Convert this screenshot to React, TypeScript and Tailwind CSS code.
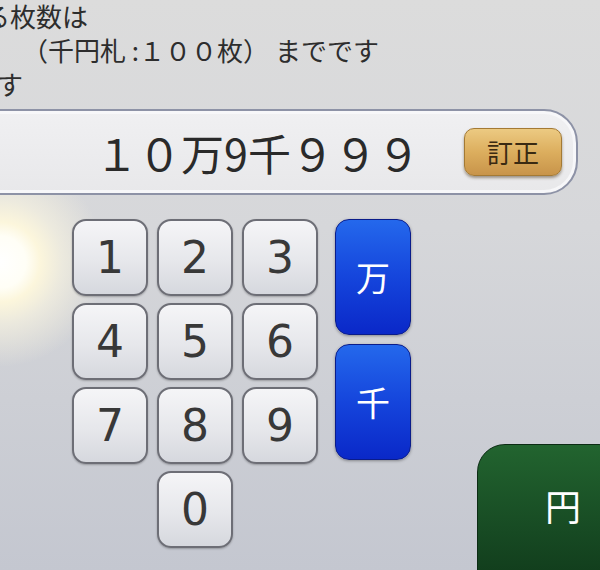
import React from 'react'

const jp = "font-['Noto_Sans_CJK_JP','Noto_Sans',sans-serif]"

const Key: React.FC<{ label: string; className?: string }> = ({ label, className = '' }) => (
  <button
    className={`w-[76px] h-[77px] rounded-[14px] border-2 border-[#6d6e76] bg-[linear-gradient(180deg,#f5f5f7_0%,#e6e7eb_55%,#d6d8de_100%)] shadow-[0_1px_2px_rgba(0,0,0,0.25)] flex items-center justify-center text-[44px] leading-none text-[#383838] font-['DejaVu_Sans',sans-serif] ${className}`}
  >
    {label}
  </button>
)

const UnitKey: React.FC<{ label: string }> = ({ label }) => (
  <button
    className={`w-[76px] h-[116px] rounded-[14px] border border-[#0a1c8a] bg-[linear-gradient(180deg,#2468ec_0%,#1545dc_50%,#0a28c8_100%)] shadow-[0_1px_3px_rgba(0,0,0,0.35)] flex items-center justify-center text-white text-[34px] leading-none ${jp}`}
  >
    {label}
  </button>
)

export default function App() {
  const keys = ['1', '2', '3', '4', '5', '6', '7', '8', '9']

  return (
    <div
      className={`w-[600px] h-[570px] overflow-hidden flex flex-col text-[#2d2d2d] ${jp} bg-[radial-gradient(circle_at_0px_262px,#ffffff_0px,#fffef6_26px,#fcf6dc_40px,rgba(246,242,224,0.7)_62px,rgba(230,230,228,0)_105px),linear-gradient(180deg,#dcdcdc_0%,#d6d7da_40%,#c4c7d0_100%)]`}
    >
      {/* message */}
      <div className="text-[26px] leading-[34px] -mt-[1px]">
        <div className="-ml-[16px] whitespace-nowrap">る枚数は</div>
        <div className="ml-[22px] whitespace-nowrap">（千円札 :１００枚） までです</div>
        <div className="-ml-[3px] whitespace-nowrap">す</div>
      </div>

      {/* amount display */}
      <div className="mt-[8px] -ml-[30px] w-[608px] h-[86px] shrink-0 rounded-r-[34px] rounded-l-[10px] border-2 border-[#8d92a6] bg-[linear-gradient(180deg,#f0f0f2_0%,#e8e8ea_100%)] shadow-[inset_0_0_0_3px_#f7f7f9] flex items-center justify-end pr-[14px]">
        <div className="mr-[44px] text-[43px] leading-none text-[#2a2a2a] whitespace-nowrap">１０万9千９９９</div>
        <button className="w-[98px] h-[48px] rounded-[10px] border border-[#a47a34] bg-[linear-gradient(180deg,#ecca82_0%,#dcae5e_50%,#c8944a_100%)] shadow-[0_2px_3px_rgba(60,40,10,0.45)] flex items-center justify-center text-[26px] leading-none text-[#3a2a12]">
          訂正
        </button>
      </div>

      {/* keypad row */}
      <div className="mt-[24px] flex items-start">
        <div className="ml-[72px] grid grid-cols-[76px_76px_76px] gap-x-[9px] gap-y-[7px]">
          {keys.map((k) => (
            <Key key={k} label={k} />
          ))}
          <Key label="0" className="col-start-2" />
        </div>

        <div className="ml-[17px] flex flex-col gap-[9px]">
          <UnitKey label="万" />
          <UnitKey label="千" />
        </div>

        <button className="ml-auto mt-[225px] -mr-[27px] w-[150px] h-[160px] shrink-0 rounded-[28px] border border-[#0c2c14] bg-[linear-gradient(180deg,#22642f_0%,#174a23_55%,#0e3518_100%)] flex items-start pl-[67px] pt-[42px] text-white text-[36px] leading-none">
          円
        </button>
      </div>
    </div>
  )
}
